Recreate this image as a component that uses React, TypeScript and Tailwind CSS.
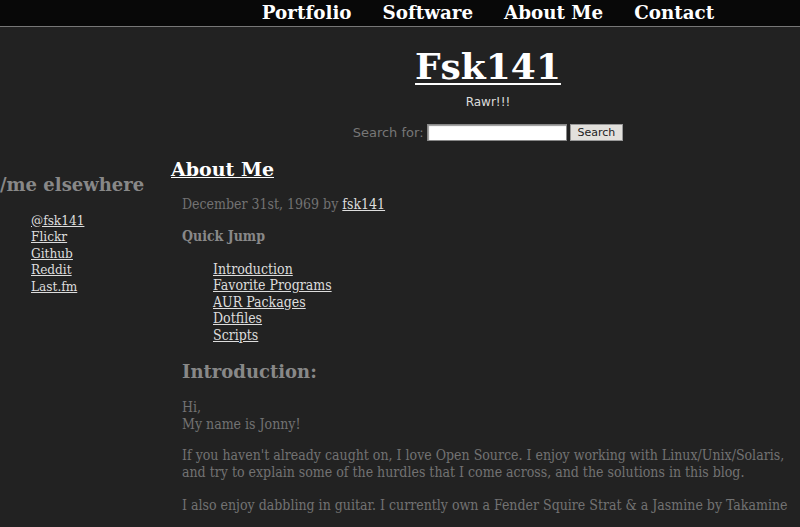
export default function App() {
  const nav = ["Portfolio", "Software", "About Me", "Contact"];
  const elsewhere = ["@fsk141", "Flickr", "Github", "Reddit", "Last.fm"];
  const jumps = ["Introduction", "Favorite Programs", "AUR Packages", "Dotfiles", "Scripts"];

  return (
    <div className="min-h-screen bg-[#222222] font-['DejaVu_Serif',serif]">
      <nav className="h-[27px] bg-[#080808] border-b border-[#777777] pl-[176px] flex justify-center">
        <ul className="flex items-center gap-[31px] font-bold text-[18.3px] leading-none text-white">
          {nav.map((n) => (
            <li key={n}>{n}</li>
          ))}
        </ul>
      </nav>

      <header className="pl-[176px] flex flex-col items-center">
        <h1 className="mt-[19px] font-bold text-[36px] leading-[40px] text-white underline decoration-2 underline-offset-4">
          Fsk141
        </h1>
        <p className="mt-[8px] font-['DejaVu_Sans',sans-serif] text-[12px] leading-[16px] text-[#dddddd]">Rawr!!!</p>
        <form className="mt-[13px] flex items-center gap-[3px] font-['DejaVu_Sans',sans-serif] text-[13px] text-[#777777]">
          <label>Search for:</label>
          <input className="w-[140px] h-[17px] bg-white border border-[#888] shadow-[inset_1px_1px_1px_#999]" />
          <button type="button" className="h-[17px] px-[7px] bg-[#e2e0dc] border border-[#999] text-[11px] leading-none text-[#222]">
            Search
          </button>
        </form>
      </header>

      <div className="flex mt-[15px]">
        <aside className="w-[171px] pt-[17px]">
          <h2 className="font-bold text-[18px] leading-[20px] text-[#888888]">/me elsewhere</h2>
          <ul className="mt-[17px] pl-[31px] font-stretch-condensed text-[13.5px] leading-[16.5px] text-[#dddddd]">
            {elsewhere.map((e) => (
              <li key={e}>
                <a className="underline">{e}</a>
              </li>
            ))}
          </ul>
        </aside>

        <main className="flex-1">
          <h2 className="font-bold text-[19px] leading-[22px] text-white underline">About Me</h2>
          <div className="pl-[11px] font-stretch-condensed text-[14px] leading-[16.5px] text-[#727272]">
            <p className="mt-[16px]">
              December 31st, 1969 by <a className="underline text-[#dddddd]">fsk141</a>
            </p>
            <h3 className="mt-[16px] font-bold text-[14px] text-[#888888]">Quick Jump</h3>
            <ul className="mt-[16px] pl-[31px] text-[#dddddd]">
              {jumps.map((j) => (
                <li key={j}>
                  <a className="underline">{j}</a>
                </li>
              ))}
            </ul>
            <h3 className="mt-[18px] font-stretch-normal font-bold text-[18px] leading-[22px] text-[#888888]">
              Introduction:
            </h3>
            <p className="mt-[16px]">
              Hi,
              <br />
              My name is Jonny!
            </p>
            <p className="mt-[15px]">
              If you haven't already caught on, I love Open Source. I enjoy working with Linux/Unix/Solaris, and try to
              explain some of the hurdles that I come across, and the solutions in this blog.
            </p>
            <p className="mt-[17px]">
              I also enjoy dabbling in guitar. I currently own a Fender Squire Strat &amp; a Jasmine by Takamine
            </p>
          </div>
        </main>
      </div>
    </div>
  );
}
